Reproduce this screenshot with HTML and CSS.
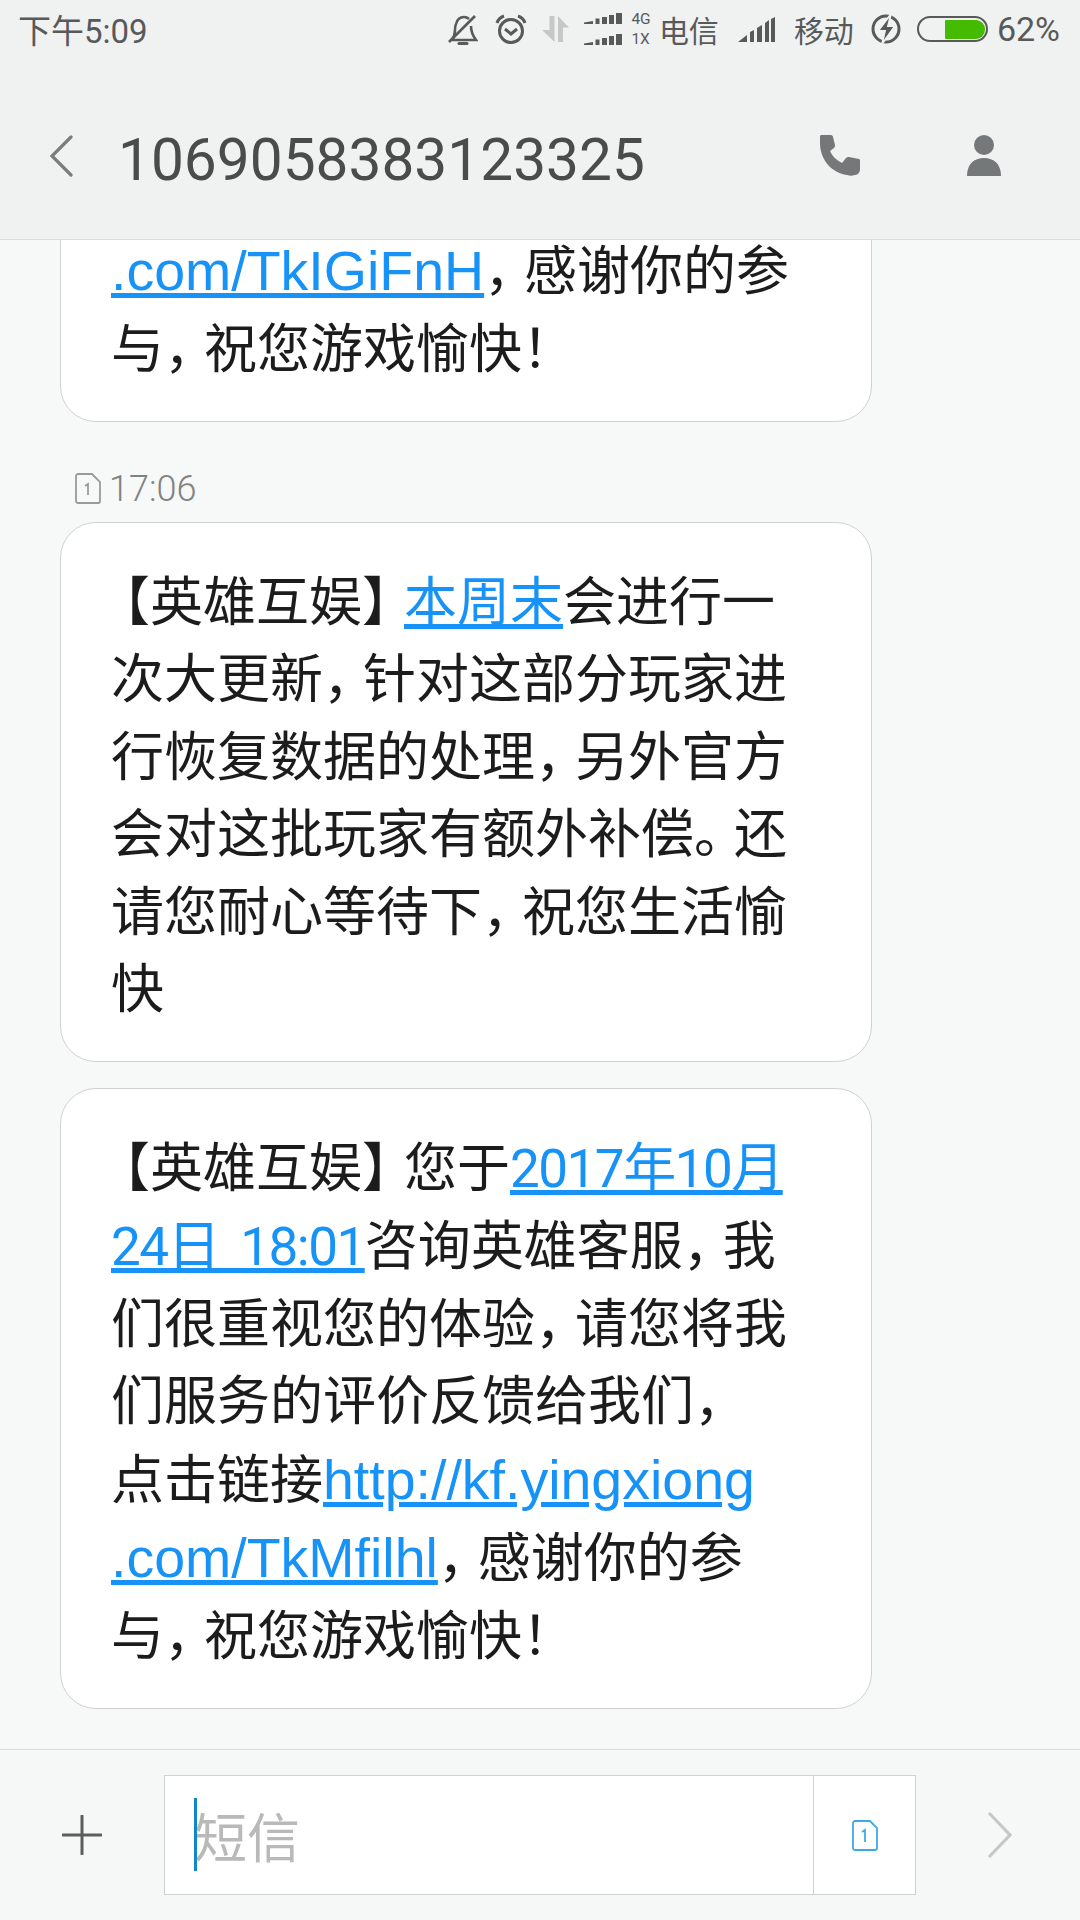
FILE: index.html
```html
<!DOCTYPE html>
<html lang="zh-CN">
<head>
<meta charset="utf-8">
<title>短信</title>
<link rel="stylesheet" href="styles.css">
</head>
<body>
<div class="app">
  <header class="top">
    <div class="status">
      <span class="clock">下午5:09</span>
      <div class="status-right">
        <svg class="i-bell" viewBox="0 0 30 31" fill="none" stroke="#585a5a" stroke-width="2.600"><path d="M4 26c2-3 3-6 3-10 0-2 0-4 1-6 1-4 4-7 8-7 2 0 4 1 5 2M23 12c0 6 2 10 5 14H4"/><path d="M1 28 27 2"/><path d="M11 29.500h8" stroke-width="3" stroke-linecap="round"/></svg>
        <svg class="i-alarm" viewBox="0 0 32 30" fill="none" stroke="#585a5a" stroke-width="3"><circle cx="16" cy="17" r="11.500"/><path d="m10 15 6 5 6-5"/><path d="M2 9c1-3 4-6 7-7M30 9c-1-3-4-6-7-7"/></svg>
        <svg class="i-data" viewBox="0 0 27 26" fill="#c6c8c8"><path d="M7.500 0h5v26L0 14h7.500zM16 26V0l11 11.500h-6V26z"/></svg>
        <svg class="i-dual" viewBox="0 0 38 32" fill="#585a5a"><path d="M0 11V9.500L9 8v3zM11.500 5.500h4V11h-4zM18 4h5v7h-5zM25 2h5v9h-5zM32 0h6v11h-6zM0 32v-1.500l9-1.500v3zM11.500 26.500h4V32h-4zM18 25h5v7h-5zM25 23h5v9h-5zM32 21h6v11h-6z"/></svg>
        <span class="netlabels"><span>4G</span><span>1X</span></span>
        <span class="carrier">电信</span>
        <svg class="i-sig" viewBox="0 0 37 25" fill="#585a5a"><path d="M0 25 9 18v7zM12 15l4-2v12h-4zM19 11l5-3v17h-5zM27 6l4-3v22h-4zM33 2l4-2v25h-4z"/></svg>
        <span class="carrier c2">移动</span>
        <svg class="i-bolt" viewBox="0 0 30 30" fill="none"><circle cx="15" cy="15" r="13" stroke="#585a5a" stroke-width="3"/><path d="M20 0 7 17h7l-3 13 13-18h-7z" fill="#585a5a" stroke="#f0f2f2" stroke-width="1.800"/></svg>
        <span class="battery"><span class="battery-fill"></span></span>
        <span class="pct">62%</span>
      </div>
    </div>
    <div class="titlebar">
      <svg class="i-back" viewBox="0 0 24 42" fill="none" stroke="#7b7d7d" stroke-width="3.200" stroke-linecap="round"><path d="M22 2 3 21l19 19"/></svg>
      <h1 class="title">1069058383123325</h1>
      <svg class="i-phone" viewBox="0 0 40 41" fill="#757878"><path d="M0 1c0-1 1-1 2-1h9c1 0 2 1 2 2l2 8c0 1 0 2-1 3l-4 3c2 5 6 9 12 12l4-5c1-1 2-1 3-1l10 2c1 0 1 1 1 2v8c0 3-2 6-5 6-3 1-5 1-8 0C12 38 0 25 0 8z"/></svg>
      <svg class="i-person" viewBox="0 0 34 41" fill="#757878"><circle cx="17" cy="10" r="10"/><path d="M0 41c0-12 7-18 17-18s17 6 17 18z"/></svg>
    </div>
  </header>

  <main class="messages">
    <div class="bubble first">
      <a class="link url">.com/TkIGiFnH</a><span class="p">，</span>感谢你的参<br>与<span class="p">，</span>祝您游戏愉快！
    </div>
    <div class="stamp">
      <svg class="i-sim" viewBox="0 0 26 31" fill="none" stroke="#9a9a9a" stroke-width="1.800"><path d="M3 1h14l8 8v19a2 2 0 0 1-2 2H3a2 2 0 0 1-2-2V3a2 2 0 0 1 2-2z"/><path d="M10 13l3-2v11"/></svg>
      <span>17:06</span>
    </div>
    <div class="bubble">
      <span class="bl">【</span>英雄互娱<span class="br">】</span><a class="link">本周末</a>会进行一<br>次大更新<span class="p">，</span>针对这部分玩家进<br>行恢复数据的处理<span class="p">，</span>另外官方<br>会对这批玩家有额外补偿<span class="p">。</span>还<br>请您耐心等待下<span class="p">，</span>祝您生活愉<br>快
    </div>
    <div class="bubble next">
      <span class="bl">【</span>英雄互娱<span class="br">】</span>您于<a class="link num">2017年10月</a><br><a class="link num">24日 18:01</a>咨询英雄客服<span class="p">，</span>我<br>们很重视您的体验<span class="p">，</span>请您将我<br>们服务的评价反馈给我们<span class="p">，</span><br>点击链接<a class="link url">http://kf.yingxiong</a><br><a class="link url">.com/TkMfilhl</a><span class="p">，</span>感谢你的参<br>与<span class="p">，</span>祝您游戏愉快！
    </div>
  </main>

  <footer class="compose">
    <div class="plus-cell">
      <svg class="i-plus" viewBox="0 0 40 40" stroke="#5c5e5e" stroke-width="3" stroke-linecap="round"><path d="M20 1v38M1 20h38"/></svg>
    </div>
    <div class="input">
      <div class="field"><span class="caret"></span><span class="placeholder">短信</span></div>
      <div class="sim-cell">
        <svg class="i-sim2" viewBox="0 0 26 31" fill="none" stroke="#3fa9e8" stroke-width="1.800"><path d="M3 1h15l7 7v20a2 2 0 0 1-2 2H3a2 2 0 0 1-2-2V3a2 2 0 0 1 2-2z"/><path d="M10 12l3-2v12"/></svg>
      </div>
    </div>
    <div class="send-cell">
      <svg class="i-send" viewBox="0 0 24 46" fill="none" stroke="#c6c8c8" stroke-width="3.200" stroke-linecap="round"><path d="M2 2l20 21L2 44"/></svg>
    </div>
  </footer>
</div>
</body>
</html>
```

FILE: styles.css
```css
* { box-sizing: border-box; }
html, body { margin: 0; padding: 0; }
body {
  font-family: Roboto, "Noto Sans CJK SC", sans-serif;
  background: #f7f8f8;
  font-variant-ligatures: none;
}
.app {
  width: 1080px;
  height: 1920px;
  display: flex;
  flex-direction: column;
  overflow: hidden;
}

/* top */
.top {
  flex: none;
  height: 240px;
  background: #f0f2f2;
  border-bottom: 1px solid #dcdede;
}
.status {
  height: 60px;
  display: flex;
  align-items: center;
  justify-content: space-between;
  padding: 0 20px 2px 18px;
  color: #585a5a;
}
.clock { font-size: 33px; }
.status-right { display: flex; align-items: center; }
.i-bell { width: 30px; height: 31px; }
.i-alarm { width: 32px; height: 30px; margin-left: 17px; }
.i-data { width: 27px; height: 26px; margin-left: 15px; }
.i-dual { width: 38px; height: 32px; margin-left: 15px; }
.netlabels {
  display: flex;
  flex-direction: column;
  font-size: 15.500px;
  line-height: 20px;
  margin-left: 9px;
  width: 20px;
}
.carrier { font-size: 30px; margin-left: 7.500px; }
.c2 { margin-left: 19px; }
.i-sig { width: 37px; height: 25px; margin-left: 19px; }
.i-bolt { width: 30px; height: 30px; margin-left: 17px; }
.battery {
  width: 71px;
  height: 26px;
  margin-left: 16px;
  border: 2.500px solid #585a5a;
  border-radius: 13px;
  padding: 1.500px 0.500px;
  display: flex;
  justify-content: flex-end;
}
.battery-fill {
  width: 40px;
  background: #44bb00;
  border-radius: 1px 9px 9px 1px;
}
.pct { font-size: 34px; margin-left: 9px; }

.titlebar {
  height: 179px;
  display: flex;
  align-items: center;
  padding: 20px 0 0 49px;
  color: #4a4c4c;
}
.i-back { width: 24px; height: 42px; flex: none; margin-top: -8px; }
.title {
  margin: 0 0 0 45px;
  font-size: 58.600px;
  font-weight: 400;
  width: 702px;
}
.i-phone { width: 40px; height: 41px; flex: none; margin-top: -8px; }
.i-person { width: 34px; height: 41px; flex: none; margin: -8px 0 0 107px; }

/* messages */
.messages {
  flex: 1;
  min-height: 0;
  overflow: hidden;
  display: flex;
  flex-direction: column;
  justify-content: flex-end;
  padding: 0 208px 40px 60px;
}
.bubble {
  flex: none;
  background: #fff;
  border: 1px solid #d0d2d2;
  border-radius: 36px;
  padding: 42px 0 31.400px 50px;
  font-size: 53px;
  line-height: 77.600px;
  color: #1c1c1c;
  white-space: nowrap;
}
.first { padding-top: 60px; }
.next { margin-top: 26px; }
.link { color: #1793f7; text-decoration: underline; }
.url { font-family: "Liberation Sans", sans-serif; font-size: 55.500px; }
.num { letter-spacing: -1.500px; word-spacing: 9.500px; }
.p { letter-spacing: -13px; }
.bl { margin-left: -14px; }
.br { letter-spacing: -11px; }
.stamp {
  flex: none;
  height: 100px;
  display: flex;
  align-items: center;
  gap: 8px;
  padding: 34px 0 0 15px;
  font-size: 36px;
  font-weight: 300;
  color: #808282;
}
.i-sim { width: 26px; height: 31px; }

/* compose */
.compose {
  flex: none;
  height: 171px;
  display: flex;
  align-items: center;
  border-top: 1px solid #d8dada;
  background: #f6f7f7;
}
.plus-cell {
  width: 164px;
  display: flex;
  justify-content: center;
  flex: none;
}
.i-plus { width: 40px; height: 40px; }
.input {
  width: 752px;
  height: 120px;
  flex: none;
  display: flex;
  background: #fff;
  border: 1px solid #cfd1d1;
}
.field {
  width: 648px;
  display: flex;
  align-items: center;
  padding-left: 29px;
  position: relative;
}
.caret {
  position: absolute;
  left: 29px;
  top: 22px;
  width: 3px;
  height: 73px;
  background: #1088c8;
}
.placeholder { font-size: 53px; color: #b9b9b9; }
.sim-cell {
  flex: 1;
  display: flex;
  align-items: center;
  justify-content: center;
  border-left: 1px solid #cfd1d1;
}
.i-sim2 { width: 26px; height: 31px; }
.send-cell {
  flex: 1;
  display: flex;
  justify-content: flex-start;
  padding-left: 72px;
}
.i-send { width: 24px; height: 46px; }
```
